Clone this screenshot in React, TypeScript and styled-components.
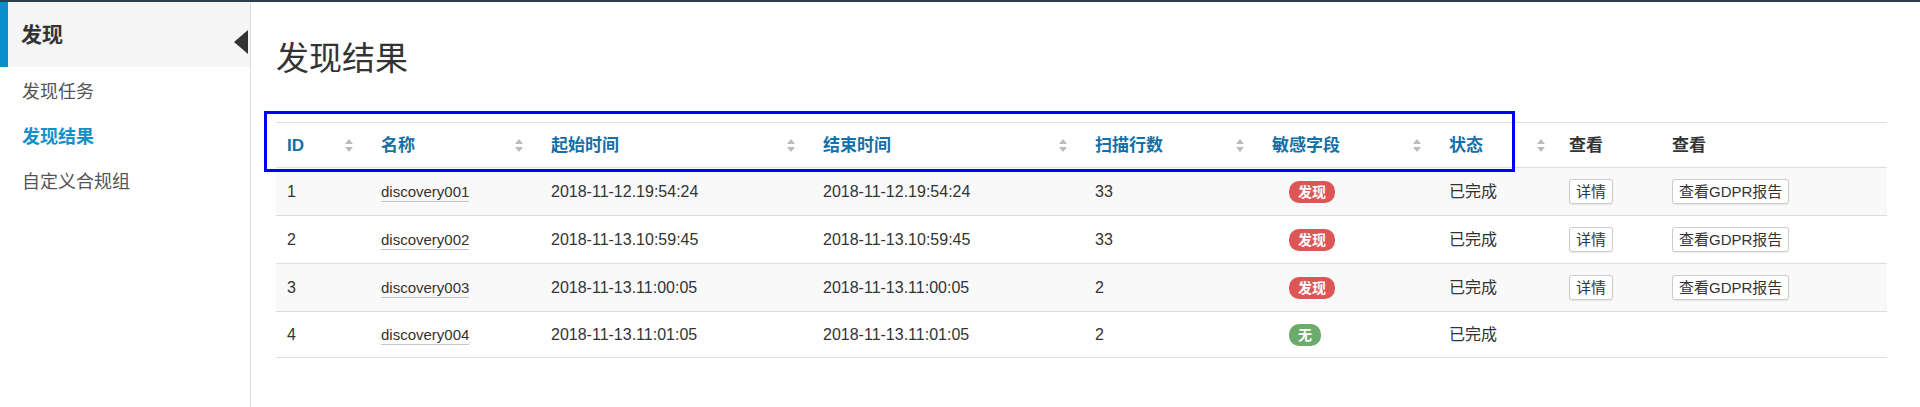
import React, { FC } from 'react';
import styled, { createGlobalStyle } from 'styled-components';

const GlobalStyle = createGlobalStyle`
    html, body {
        margin: 0;
        padding: 0;
        background: #fff;
    }
    body {
        font-family: 'Liberation Sans', 'Noto Sans CJK SC', sans-serif;
        color: #333;
    }
`;

const FONT = `'Liberation Sans', 'Noto Sans CJK SC', sans-serif`;

const TopBar = styled.div`
    height: 2px;
    background: #2b3e50;
`;

const Layout = styled.div`
    display: flex;
    min-height: calc(100vh - 2px);
`;

const Sidebar = styled.aside`
    width: 250px;
    flex-shrink: 0;
    border-right: 1px solid #ddd;
    display: flex;
    flex-direction: column;
`;

const SideHeader = styled.div`
    position: relative;
    height: 65px;
    border-left: 8px solid #0b8fcb;
    background: #f5f5f5;
    padding: 0 0 4px 13px;
    box-sizing: border-box;
    display: flex;
    align-items: center;
    font-family: ${FONT};
    font-size: 21px;
    font-weight: 700;
    color: #333;
`;

const Caret = styled.span`
    position: absolute;
    right: 2px;
    top: 28px;
    width: 0;
    height: 0;
    border-top: 12.5px solid transparent;
    border-bottom: 12.5px solid transparent;
    border-right: 14px solid #333;
`;

const SideItem = styled.div<{ $active?: boolean }>`
    height: 45px;
    display: flex;
    align-items: center;
    padding-left: 22px;
    font-family: ${FONT};
    font-size: 18px;
    font-weight: ${(p) => (p.$active ? 700 : 400)};
    color: ${(p) => (p.$active ? '#1591c9' : '#555')};
`;

const Main = styled.main`
    flex: 1;
    padding: 39px 33px 0 25px;
`;

const Title = styled.h1`
    margin: 0 0 45px;
    font-family: ${FONT};
    font-size: 33px;
    line-height: 36px;
    font-weight: 400;
    color: #333;
`;

const TableWrap = styled.div`
    position: relative;
`;

// annotation frame drawn over the sortable header cells
const Highlight = styled.div`
    position: absolute;
    left: -12px;
    top: -11px;
    width: 1251px;
    height: 61px;
    border: 3px solid #0000ff;
    box-sizing: border-box;
    pointer-events: none;
`;

const Table = styled.table`
    width: 100%;
    table-layout: fixed;
    border-collapse: collapse;
    border-top: 1px solid #ddd;
    font-family: ${FONT};
`;

const Col = styled.col<{ $w: number }>`
    width: ${(p) => p.$w}px;
`;

const Th = styled.th<{ $sortable?: boolean }>`
    padding: 12px 11px 11px ${(p) => (p.$sortable ? 11 : 7)}px;
    text-align: left;
    font-size: 17px;
    line-height: 21px;
    font-weight: 700;
    color: ${(p) => (p.$sortable ? '#136fa6' : '#333')};
    border-bottom: 1px solid #ddd;
`;

const HeadInner = styled.div`
    display: flex;
    align-items: center;
    justify-content: space-between;
`;

const SortMark = styled.svg`
    flex-shrink: 0;
    margin-right: 6px;
`;

const Tr = styled.tr<{ $striped?: boolean }>`
    background: ${(p) => (p.$striped ? '#f9f9f9' : '#fff')};
`;

const Td = styled.td`
    padding: 11px 11px;
    font-size: 16px;
    line-height: 21px;
    color: #333;
    vertical-align: middle;
    border-bottom: 1px solid #ddd;
    white-space: nowrap;
`;

const ActionTd = styled(Td)`
    padding-left: 7px;
`;

const NameLink = styled.span`
    font-size: 15px;
    color: #333;
    border-bottom: 1px solid #cbbfc7;
    padding-bottom: 1px;
`;

const Badge = styled.span<{ $tone: 'danger' | 'success' }>`
    display: inline-block;
    margin-left: 17px;
    height: 22px;
    line-height: 22px;
    padding: 0 9px;
    border-radius: 10px;
    font-size: 14px;
    font-weight: 700;
    color: #fff;
    background: ${(p) => (p.$tone === 'danger' ? '#dc5654' : '#6dab6d')};
    vertical-align: middle;
`;

const BtnBox = styled.div`
    display: flex;
    height: 25px;
    align-items: center;
`;

const Button = styled.button`
    height: 25px;
    padding: 0 6px;
    background: #fff;
    border: 1px solid #ccc;
    border-radius: 3px;
    box-shadow: 0 1px 1px rgba(0, 0, 0, 0.08);
    font-family: ${FONT};
    font-size: 15px;
    line-height: 23px;
    color: #333;
    cursor: pointer;
`;

const SortIcon: FC = () => (
    <SortMark width="8" height="13" viewBox="0 0 8 13">
        <path d="M4 0 L8 5 L0 5 Z" fill="#bbb" />
        <path d="M0 8 L8 8 L4 13 Z" fill="#bbb" />
    </SortMark>
);

const columns = [
    { label: 'ID', w: 94, sort: true },
    { label: '名称', w: 170, sort: true },
    { label: '起始时间', w: 272, sort: true },
    { label: '结束时间', w: 272, sort: true },
    { label: '扫描行数', w: 177, sort: true },
    { label: '敏感字段', w: 177, sort: true },
    { label: '状态', w: 124, sort: true },
    { label: '查看', w: 103, sort: false },
    { label: '查看', w: 222, sort: false },
];

const rows = [
    { id: 1, name: 'discovery001', start: '2018-11-12.19:54:24', end: '2018-11-12.19:54:24', count: 33, found: true },
    { id: 2, name: 'discovery002', start: '2018-11-13.10:59:45', end: '2018-11-13.10:59:45', count: 33, found: true },
    { id: 3, name: 'discovery003', start: '2018-11-13.11:00:05', end: '2018-11-13.11:00:05', count: 2, found: true },
    { id: 4, name: 'discovery004', start: '2018-11-13.11:01:05', end: '2018-11-13.11:01:05', count: 2, found: false },
];

const App: FC = () => {
    return (
        <>
            <GlobalStyle />
            <TopBar />
            <Layout>
                <Sidebar>
                    <SideHeader>
                        发现
                        <Caret />
                    </SideHeader>
                    <SideItem>发现任务</SideItem>
                    <SideItem $active>发现结果</SideItem>
                    <SideItem>自定义合规组</SideItem>
                </Sidebar>
                <Main>
                    <Title>发现结果</Title>
                    <TableWrap>
                        <Table>
                            <colgroup>
                                {columns.map((c, i) => (
                                    <Col key={i} $w={c.w} />
                                ))}
                            </colgroup>
                            <thead>
                                <tr>
                                    {columns.map((c, i) => (
                                        <Th key={i} $sortable={c.sort}>
                                            <HeadInner>
                                                <span>{c.label}</span>
                                                {c.sort && <SortIcon />}
                                            </HeadInner>
                                        </Th>
                                    ))}
                                </tr>
                            </thead>
                            <tbody>
                                {rows.map((r, i) => (
                                    <Tr key={r.id} $striped={i % 2 === 0}>
                                        <Td>{r.id}</Td>
                                        <Td>
                                            <NameLink>{r.name}</NameLink>
                                        </Td>
                                        <Td>{r.start}</Td>
                                        <Td>{r.end}</Td>
                                        <Td>{r.count}</Td>
                                        <Td>
                                            {r.found ? (
                                                <Badge $tone="danger">发现</Badge>
                                            ) : (
                                                <Badge $tone="success">无</Badge>
                                            )}
                                        </Td>
                                        <Td>已完成</Td>
                                        <ActionTd>
                                            {r.found && (
                                                <BtnBox>
                                                    <Button>详情</Button>
                                                </BtnBox>
                                            )}
                                        </ActionTd>
                                        <ActionTd>
                                            {r.found && (
                                                <BtnBox>
                                                    <Button>查看GDPR报告</Button>
                                                </BtnBox>
                                            )}
                                        </ActionTd>
                                    </Tr>
                                ))}
                            </tbody>
                        </Table>
                        <Highlight />
                    </TableWrap>
                </Main>
            </Layout>
        </>
    );
};

export default App;
